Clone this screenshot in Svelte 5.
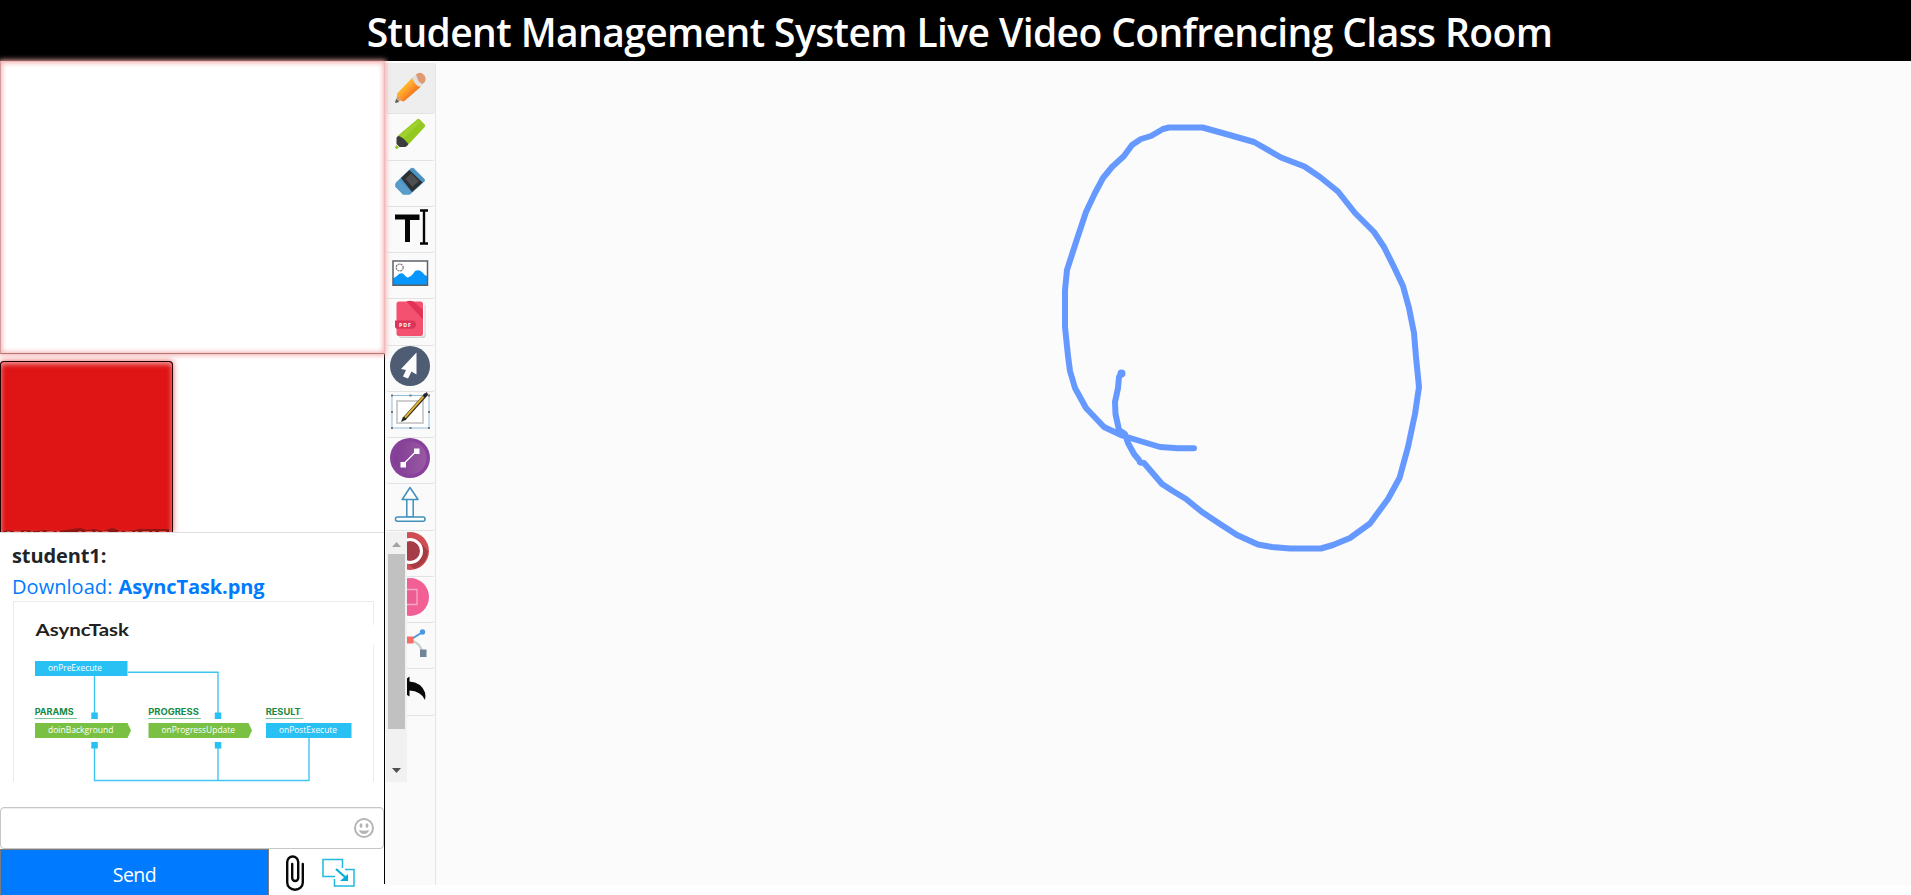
<script>
  const tools = ['pencil', 'marker', 'eraser', 'text', 'image', 'pdf', 'pointer', 'drag', 'line', 'arrow', 'arc', 'rect', 'curve', 'undo'];
</script>

<div class="page">
  <header><h1>Student Management System Live Video Confrencing Class Room</h1></header>
  <main>
    <aside>
      <div class="videos">
        <div class="main-video"></div>
        <div class="small-video">
          <svg width="172" height="6" viewBox="0 0 172 6"><path d="M2 5L8 4L12 5L25 4L35 5L42 4L57 5L64 4L80 2L86 4L94 3L102 5L112 2L121 5L135 4L138 3H169V6H2Z" fill="#8e1713" /><path d="M6 5.500h26M39 5.500h24M78 5.500h30M118 5.500h50" stroke="#e8594b" stroke-dasharray="3 4 7 3" /></svg>
        </div>
      </div>
      <div class="chat">
        <div class="messages">
          <div class="name">student1:</div>
          <a class="download" href="#file"><span>Download:</span><b>AsyncTask.png</b></a>
          <svg class="diagram" width="361" height="181" viewBox="13 601 361 181">
            <path d="M13.500 782V601.500H373.500V625M373.500 645V782" fill="none" stroke="#ebebeb" />
            <text x="35.500" y="636" textLength="93.500" lengthAdjust="spacingAndGlyphs" font-size="17" font-weight="700" fill="#231f20">AsyncTask</text>
            <g fill="none" stroke="#3fc5f2" stroke-width="1.400"><path d="M94.500 676V780.500H309V738M128 672.300H218V780.500" /></g>
            <path d="M93 719h4v23h-4zM216 719h4v23h-4z" fill="#fff" />
            <g fill="#29c1f3"><path d="M35 661h92.500v15H35zM91.300 712.500h6.500v6.500h-6.500zM214.800 712.500h6.500v6.500h-6.500zM91.300 742h6.500v6.500h-6.500zM214.800 742h6.500v6.500h-6.500zM266 723h85.500v15h-85.500z" /></g>
            <path d="M35 723h92.500l3.500 7.500l-3.500 7.500H35zM148.500 723h100l3.500 7.500l-3.500 7.500h-100z" fill="#7ac143" />
            <path d="M34.500 718.500H77M148 718.500h53M265.500 718.500H303.500" stroke="#7cc49a" />
            <g class="heading" fill="#158a45" font-size="8.700" font-weight="700">
              <text x="34.700" y="715.300" textLength="39" lengthAdjust="spacingAndGlyphs">PARAMS</text>
              <text x="148.300" y="715.300" textLength="50.500" lengthAdjust="spacingAndGlyphs">PROGRESS</text>
              <text x="265.700" y="715.300" textLength="35" lengthAdjust="spacingAndGlyphs">RESULT</text>
            </g>
            <g class="box-label" fill="#fff" font-size="8.700">
              <text x="48" y="671" textLength="54" lengthAdjust="spacingAndGlyphs">onPreExecute</text>
              <text x="48" y="733.300" textLength="65.500" lengthAdjust="spacingAndGlyphs">doinBackground</text>
              <text x="161.500" y="733.300" textLength="73.500" lengthAdjust="spacingAndGlyphs">onProgressUpdate</text>
              <text x="279" y="733.300" textLength="58" lengthAdjust="spacingAndGlyphs">onPostExecute</text>
            </g>
          </svg>
        </div>
        <div class="scrollbar">
          <svg width="9" height="5" viewBox="0 0 9 5"><path d="M0 5L4.500 0L9 5z" fill="#a3a3a3" /></svg>
          <div class="thumb"></div>
          <svg width="9" height="5" viewBox="0 0 9 5"><path d="M0 0L4.500 5L9 0z" fill="#505050" /></svg>
        </div>
      </div>
      <div class="composer">
        <svg width="22" height="22" viewBox="0 0 22 22"><circle cx="11" cy="11" r="9" fill="none" stroke="#b5b5b5" stroke-width="2" /><ellipse cx="8" cy="8.600" rx="1.400" ry="2.300" fill="#b5b5b5" /><ellipse cx="14" cy="8.600" rx="1.400" ry="2.300" fill="#b5b5b5" /><path d="M6 13q5 1.500 10 0q-1 4-5 4t-5-4z" fill="#b5b5b5" /></svg>
      </div>
      <div class="actions">
        <button>Send</button>
        <svg class="clip" width="20" height="36" viewBox="0 0 20 36"><path d="M17.800 9V27.500a7.800 7.300 0 0 1-15.600 0V7a5.500 5.500 0 0 1 11 0V23a3 3 0 0 1-6 0V9" fill="none" stroke="#080808" stroke-width="2.400" stroke-linecap="round" /></svg>
        <svg class="share" width="34" height="30" viewBox="0 0 34 30"><path d="M13 18.500H1V1.500H20.500V10M23 11.500H32V28H12.500V21" fill="none" stroke="#20b9df" stroke-width="1.500" /><path d="M14 11l9 8" stroke="#08acd6" stroke-width="2.200" /><path d="M26 16v7h-8z" fill="#08acd6" /></svg>
      </div>
    </aside>

    <nav>
      {#each tools as tool}
        <div class="tool" class:selected={tool === 'pencil'}>
          <svg width="40" height="40" viewBox="0 0 40 40">
            {#if tool === 'pencil'}
              <defs><linearGradient id="wood" x1="0" y1="0" x2="1" y2="1"><stop offset=".25" stop-color="#ffc72b" /><stop offset=".5" stop-color="#ff992b" /><stop offset=".75" stop-color="#e96712" /></linearGradient></defs>
              <path d="M5 34.500l3-9l6 6z" fill="#d7a078" /><path d="M5 35l1.200-4l3 3z" fill="#565b61" />
              <path d="M7 25.500L22.500 9.500l8.500 9L15 32.500q-3 2-4-.5q-.5-2-2-2.500q-2-1-2-4z" fill="url(#wood)" />
              <path d="M22 10l4.500-4l8 9l-4.500 4q-3-1-4.500-3t-3.500-6z" fill="#dce0e2" /><path d="M26 6.500q3-3 7-.5q4 3.500 2 7.500l-2.500 2.500q-3-1-4-3t-2.500-6.500z" fill="#df9a73" />
            {:else if tool === 'marker'}
              <path d="M7 22.500L27 5.500q1.500-1.300 2.500-.2l5.200 5.200q1 1.200 0 2.500L18 31z" fill="#92c820" /><path d="M9 22L27.500 6l2.500 2.500L12 26z" fill="#9fd02d" />
              <path d="M6.500 23.500l2-1.500q4 .5 9.500 7.500v1.500l-2.500 2H9.500l-3-3z" fill="#3b3c3f" /><path d="M6 31l3 2.500l-2 1.500l-2-1z" fill="#8bc522" />
            {:else if tool === 'eraser'}
              <path d="M6 21.500L20.500 7.500q2-1.500 3.500 0L34.500 18q1 1.500 0 2.500L20 33.500h-7L5.500 26q-1-3 .5-4.500z" fill="#4a93c3" /><path d="M5.500 25.500L9 19l12.500 12l-2.500 2.500h-6z" fill="#5b9dca" />
              <path d="M11 17L19.500 9L32.500 21.500L22 31z" fill="#2d2f31" /><path d="M15.500 18l5.500-5.500L29 20l-6.500 6z" fill="#4d4e50" />
            {:else if tool === 'text'}
              <path d="M5 7.500h24.500v5.500H20V35h-5V12.500H5z" fill="#050505" /><path d="M30 3.500h8M30 36.500h8M34 3.500v33" fill="none" stroke="#050505" stroke-width="2.400" />
            {:else if tool === 'image'}
              <path d="M3.200 8.200h34v24h-34z" fill="#fff" /><circle cx="9.700" cy="14.500" r="3.500" fill="none" stroke="#777" stroke-width="1.200" stroke-dasharray="2.200 .6" />
              <path d="M3 25.500q4-2 6-4.500q3-1.500 5 .5q3 4 5 2.500q3-1 6-6q4-2 7 1q2 3 5 4v9H3z" fill="#0796fb" /><path d="M3 8h34.500v24.300H3z" fill="none" stroke="#5a6268" stroke-width="1.500" />
            {:else if tool === 'pdf'}
              <rect x="9" y="5" width="26.500" height="34" rx="2.500" fill="#cfcfcf" /><rect x="9" y="3.500" width="25.500" height="34" rx="2.500" fill="#fff" /><rect x="6.500" y="2.500" width="26.500" height="34.500" rx="2.500" fill="#f3516f" />
              <path d="M16.500 2.500q3-1.500 7 0L33 11v9.500z" fill="#e13358" /><path d="M5 21.500h18q3 1 3 4t-3 4.300H7q-2-.3-2-2.500z" fill="#dc3459" /><text x="9" y="27.800" font-size="5.300" font-weight="700" fill="#fff" textLength="12">PDF</text>
            {:else if tool === 'pointer'}
              <circle cx="20" cy="20" r="20" fill="#4e5d73" /><path d="M26.500 6.500v22l-5-3l-3.500 7l-5-2l3-6.500l-5-1z" fill="#fff" />
            {:else if tool === 'drag'}
              <path d="M2 3.500h37v32.500H2z" fill="#fff" stroke="#8ebddc" /><path d="M7 9h26v22H7z" fill="#fff" stroke="#cecece" stroke-width="2" />
              <g fill="#777"><path d="M1 2.500h2v2H1zM19.500 2.500h2v2h-2zM38 2.500h2v2h-2zM1 19h2v2H1zM38 19h2v2h-2zM1 35h2v2H1zM19.500 35h2v2h-2zM38 35h2v2h-2z" /></g>
              <path d="M14 27L36 2.500" stroke="#332e20" stroke-width="3.600" /><path d="M15 25.500L34 4" stroke="#e0b136" stroke-width="1.900" /><path d="M11 30l2-5l3.500 2.500z" fill="#222" /><path d="M33 3l4-3l1 3l-4 3z" fill="#242424" />
            {:else if tool === 'line'}
              <defs><linearGradient id="violet"><stop stop-color="#803d94" /><stop offset="1" stop-color="#9a59a4" /></linearGradient></defs><circle cx="20" cy="20" r="20" fill="#88419b" /><circle cx="20" cy="20" r="16.500" fill="url(#violet)" /><path d="M13 26.500L27 12.500" stroke="#fff" stroke-width="1.300" /><path d="M10.500 24h5.500v5.500h-5.500zM24 10.500h5.500v5.500H24z" fill="#fff" />
            {:else if tool === 'arrow'}
              <g fill="#fff" stroke="#3f8fba" stroke-width="1.500" stroke-linejoin="round"><path d="M20 3.500l-7.800 12H28zM16.800 15.500h6.400v17.500h-6.400z" /><rect x="5.500" y="33" width="29.500" height="4.300" rx="2" /></g>
            {:else if tool === 'arc'}
              <circle cx="20" cy="20" r="19" fill="#d04d55" /><path d="M28 9l10 11q-1 13-14 18l-5-5z" fill="#a63b44" /><circle cx="20" cy="20" r="11.500" fill="#a63c45" stroke="#fff" stroke-width="3" />
            {:else if tool === 'rect'}
              <circle cx="20" cy="20" r="19" fill="#f15f94" /><path d="M10 12.500h17v15H10z" fill="#ee5d92" stroke="#f6a8c4" stroke-width="1.300" />
            {:else if tool === 'curve'}
              <path d="M20 17q12 3 13 16" fill="none" stroke="#c6d0d2" stroke-width="2" /><path d="M20 17L32 9.500" stroke="#4c96e1" stroke-width="2" /><circle cx="32.500" cy="9" r="2.700" fill="#4c96e1" /><path d="M16 13.500h7.500v7H16z" fill="#f76d63" /><path d="M30 26.500h6.500v7.500H30z" fill="#71849a" />
            {:else}
              <path d="M5 18.500L19.500 7.500v5q12 1 15.500 11q1 4 0 7.500q-4-9-15.500-9.500v6z" fill="#080808" />
            {/if}
          </svg>
        </div>
      {/each}
    </nav>

    <section class="board">
      <svg width="1475" height="824" viewBox="436 61 1475 824">
        <path class="stroke" d="M1121.500 373.500L1119 377L1118 388L1115 402L1115.500 414L1119 430L1125 434L1128 443L1134 454L1139 460L1140 462.500L1144 463L1162 484L1172 490.500L1186 499L1202 512L1220 524L1237 535L1258 544.500L1272 547L1290 548.500H1321L1333 545L1350 538L1370 523.500L1388 499L1399.500 478L1408 447L1415 414L1419 387L1416 357L1414 333L1409 308L1403 286L1394 267L1384 247L1374 232L1355 213L1338 191.500L1320 177L1304.500 166.500L1281 157.500L1254 142L1226 134L1202.500 127.500H1169L1163 129L1151 136L1141 139L1132 145L1124 156L1112 167L1103 178L1095 193L1086 212L1077 239L1067 270L1065 290V327L1068 356L1070 371L1075 388L1086 408L1104 427L1122 435.500L1140 441L1160 447L1178 448.300H1194" />
        <circle cx="1121.500" cy="373.500" r="4" fill="#69f" />
      </svg>
    </section>
  </main>
</div>

<style>
  :global(body) { margin: 0; overflow: hidden; background: #fff; }
  .page { width: 1911px; height: 895px; font-family: "Open Sans", "Noto Sans", sans-serif; overflow: hidden; }
  header { height: 61px; background: #000; display: flex; justify-content: center; padding-left: 8px; box-sizing: border-box; }
  h1 { margin: 0; color: #fff; font-size: 39px; line-height: 64px; font-weight: 600; white-space: nowrap; letter-spacing: -0.6px; }
  main { display: flex; height: 834px; align-items: flex-start; }
  aside { width: 385px; height: 834px; flex: none; z-index: 2; display: flex; flex-direction: column; background: linear-gradient(#000, #000) 384px 0 / 1px 823px no-repeat; }
  .videos { height: 471px; display: flex; flex-direction: column; gap: 7px; align-items: flex-start; }
  .main-video { width: 385px; height: 293px; flex: none; box-sizing: border-box; border: 1px solid #ba7474; background: #fff; border-top-color: #f3b9b9; border-left-color: #d39b9b; border-right-color: #efb9b9; box-shadow: 0 0 5px 1px #efaaaa, inset 0 0 5px 1px #f3b0b0; }
  .small-video { width: 173px; height: 171px; flex: none; box-sizing: border-box; border: 1px solid #220303; border-bottom: 0; border-radius: 4px 4px 0 0; background: #df1515; display: flex; align-items: flex-end; box-shadow: 0 0 6px #ec5555, inset 0 2px 5px #f3a0a0; }
  .chat { width: 407px; height: 250px; display: flex; justify-content: space-between; position: relative; }
  .messages { width: 384px; height: 250px; box-sizing: border-box; border-top: 1px solid #ddd; padding: 7px 0 0 12px; background: #fff; overflow: hidden; color: #212529; font-size: 20px; line-height: 31px; }
  .name { font-weight: 700; height: 31px; letter-spacing: -0.1px; }
  .download { height: 30px; display: flex; gap: 6px; color: #007bff; text-decoration: none; letter-spacing: 0.05px; }
  .download b { letter-spacing: -0.1px; }
  .diagram { display: block; margin-left: 1px; font-family: Lato, sans-serif; }
  .heading { font-family: Inter, sans-serif; }
  .box-label { font-family: "Open Sans", sans-serif; }
  .scrollbar { width: 21px; height: 250px; background: #f1f1f1; display: flex; flex-direction: column; align-items: center; justify-content: space-between; padding: 10px 0 9px; box-sizing: border-box; }
  .thumb { width: 17px; height: 175px; background: #c1c1c1; margin-bottom: 32px; }
  .composer { margin-top: 25px; width: 384px; height: 42px; box-sizing: border-box; border: 1px solid #c6c6c6; border-radius: 4px; display: flex; align-items: center; justify-content: flex-end; padding-right: 8px; background: #fff; box-shadow: inset 0 1px 1px #eee; }
  .actions { height: 46px; width: 384px; display: flex; }
  button { width: 269px; height: 46px; border: 1px solid #7b7b7b; border-bottom: 0; background: #007bff; color: #fff; font: 19.500px/46px "Open Sans", sans-serif; padding: 2px 0 0; letter-spacing: -0.5px; }
  .clip { margin: 6px 0 0 16px; }
  .share { margin: 9px 0 0 17px; }
  nav { width: 50px; height: 822px; margin-top: 2px; flex: none; background: #fafafa; border-right: 1px solid #e5e5e5; }
  .tool { width: 49px; height: 46.250px; box-sizing: border-box; border-bottom: 1px solid #e2e2e2; border-radius: 0 0 3px 3px; margin-left: 1px; padding-left: 4px; }
  .tool svg { display: block; }
  .tool.selected { height: 51.400px; padding-top: 5px; background: #eee; }
  .board { width: 1475px; height: 824px; background: #fbfbfb; }
  .board svg { display: block; }
  .stroke { fill: none; stroke: #69f; stroke-width: 6; stroke-linejoin: round; stroke-linecap: round; }
</style>
